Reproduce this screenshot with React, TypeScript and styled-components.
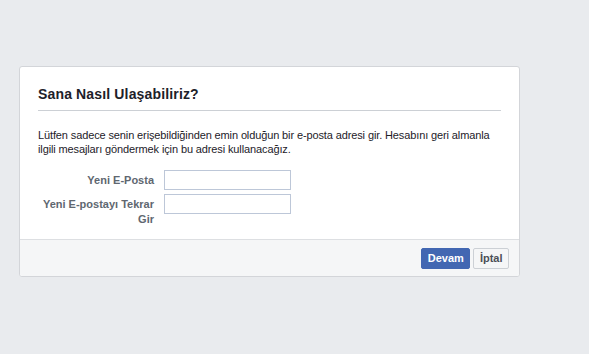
import React from "react";
import styled, { createGlobalStyle } from "styled-components";

const Global = createGlobalStyle`
  html, body { margin: 0; padding: 0; background: #e9ebee; }
  body { font-family: "Liberation Sans", Arial, sans-serif; }
`;

const Page = styled.div`
  padding: 66px 0 0 19px;
  min-height: 354px;
  box-sizing: border-box;
`;

const Card = styled.div`
  width: 501px;
  box-sizing: border-box;
  background: #fff;
  border: 1px solid #d3d5d9;
  border-radius: 3px;
  overflow: hidden;
`;

const Header = styled.div`
  margin: 0 18px;
  padding: 18px 0 7px;
  border-bottom: 1px solid #ccd0d5;
`;

const Title = styled.h2`
  margin: 0;
  font-size: 14px;
  line-height: 18px;
  letter-spacing: 0.15px;
  font-weight: bold;
  color: #1d2129;
`;

const Body = styled.div`
  padding: 17px 18px 13px;
`;

const Intro = styled.p`
  margin: 0;
  font-size: 11px;
  line-height: 14px;
  letter-spacing: -0.12px;
  color: #1d2129;
`;

const Form = styled.div`
  display: grid;
  grid-template-columns: 120px 127px;
  column-gap: 10px;
  row-gap: 4px;
  margin: 14px 0 0 -4px;
`;

const Label = styled.label`
  padding-top: 3px;
  font-size: 11px;
  line-height: 14.5px;
  font-weight: bold;
  color: #606770;
  text-align: right;
`;

const Input = styled.input`
  width: 127px;
  height: 20px;
  box-sizing: border-box;
  margin: 0;
  padding: 2px 3px;
  border: 1px solid #bdc7d8;
  border-radius: 0;
  font-family: inherit;
  font-size: 11px;
  outline: none;
`;

const Footer = styled.div`
  display: flex;
  justify-content: flex-end;
  gap: 3px;
  padding: 8px 10px 7px;
  background: #f5f6f7;
  border-top: 1px solid #dddfe2;
`;

const Button = styled.button<{ $primary?: boolean }>`
  height: 21px;
  box-sizing: border-box;
  margin: 0;
  padding: 0 5.5px;
  border-radius: 2px;
  font-family: inherit;
  font-size: 11px;
  font-weight: bold;
  line-height: 19px;
  cursor: pointer;
  border: 1px solid ${(p) => (p.$primary ? "#4267b2" : "#ccd0d5")};
  background: ${(p) => (p.$primary ? "#4267b2" : "#f5f6f7")};
  color: ${(p) => (p.$primary ? "#fff" : "#4b4f56")};
`;

export default function App() {
  return (
    <>
      <Global />
      <Page>
        <Card>
          <Header>
            <Title>Sana Nasıl Ulaşabiliriz?</Title>
          </Header>
          <Body>
            <Intro>
              Lütfen sadece senin erişebildiğinden emin olduğun bir e-posta adresi gir. Hesabını geri almanla
              ilgili mesajları göndermek için bu adresi kullanacağız.
            </Intro>
            <Form>
              <Label htmlFor="email1">Yeni E-Posta</Label>
              <Input id="email1" type="text" />
              <Label htmlFor="email2">Yeni E-postayı Tekrar Gir</Label>
              <Input id="email2" type="text" />
            </Form>
          </Body>
          <Footer>
            <Button $primary>Devam</Button>
            <Button>İptal</Button>
          </Footer>
        </Card>
      </Page>
    </>
  );
}
